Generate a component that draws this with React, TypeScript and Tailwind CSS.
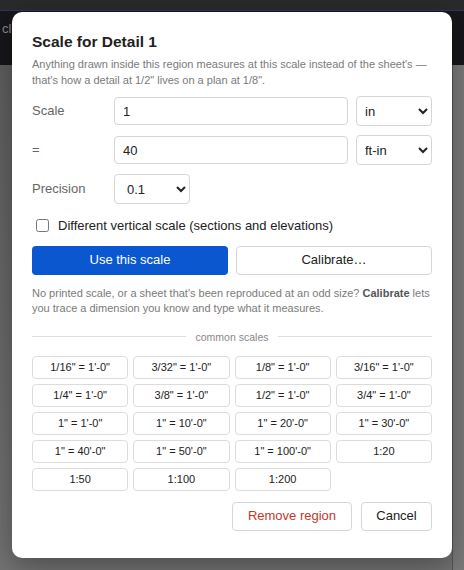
import React from "react";

const scales = [
  "1/16\" = 1'-0\"",
  "3/32\" = 1'-0\"",
  "1/8\" = 1'-0\"",
  "3/16\" = 1'-0\"",
  "1/4\" = 1'-0\"",
  "3/8\" = 1'-0\"",
  "1/2\" = 1'-0\"",
  "3/4\" = 1'-0\"",
  "1\" = 1'-0\"",
  "1\" = 10'-0\"",
  "1\" = 20'-0\"",
  "1\" = 30'-0\"",
  "1\" = 40'-0\"",
  "1\" = 50'-0\"",
  "1\" = 100'-0\"",
  "1:20",
  "1:50",
  "1:100",
  "1:200",
];

export default function App() {
  return (
    <div
      className="relative w-[464px] h-[570px] overflow-hidden bg-[#6b6b6b]"
      style={{ fontFamily: '"Liberation Sans", Arial, sans-serif' }}
    >
      {/* dimmed app behind */}
      <div className="flex flex-col h-full">
        <div className="h-[10px] bg-[#2a2a2c]" />
        <div className="h-[55px] bg-[#17171b] border-t border-[#2c3a5a] flex items-center pl-[2px]">
          <span className="text-[13px] text-[#8a8a90] -mt-[18px]">cli</span>
        </div>
        <div className="flex-1 flex bg-gradient-to-b from-[#5f5f5f] to-[#737373]">
          <div className="flex-1" />
          <div className="w-[12px] bg-[#7b7b7b] border-l border-[#555]" />
        </div>
      </div>

      {/* modal */}
      <div className="absolute left-[12px] top-[12px] w-[440px] h-[546px] bg-white rounded-[10px] shadow-[0_8px_30px_rgba(0,0,0,0.35)] px-[20px] pt-[20px]">
        <h2 className="text-[15.5px] font-bold text-[#222] leading-[20px]">Scale for Detail 1</h2>
        <p className="mt-[4px] text-[11px] leading-[16px] text-[#7a7a7a]">
          Anything drawn inside this region measures at this scale instead of the sheet's —
          that's how a detail at 1/2" lives on a plan at 1/8".
        </p>

        <div className="mt-[8px] flex flex-col gap-[9px]">
          <div className="flex items-center h-[30px]">
            <label className="w-[82px] text-[13px] text-[#666]">Scale</label>
            <input
              defaultValue="1"
              className="w-[234px] h-[28px] border border-[#d6d6d6] rounded-[4px] px-[8px] text-[13px] text-[#222] outline-none"
            />
            <select
              defaultValue="in"
              className="ml-[8px] w-[76px] h-[30px] border border-[#d6d6d6] rounded-[4px] pl-[4px] pr-[2px] text-[13px] text-[#222] bg-white"
            >
              <option value="in">in</option>
            </select>
          </div>
          <div className="flex items-center h-[30px]">
            <label className="w-[82px] text-[13px] text-[#666]">=</label>
            <input
              defaultValue="40"
              className="w-[234px] h-[28px] border border-[#d6d6d6] rounded-[4px] px-[8px] text-[13px] text-[#222] outline-none"
            />
            <select
              defaultValue="ft-in"
              className="ml-[8px] w-[76px] h-[30px] border border-[#d6d6d6] rounded-[4px] pl-[4px] pr-[2px] text-[13px] text-[#222] bg-white"
            >
              <option value="ft-in">ft-in</option>
            </select>
          </div>
          <div className="flex items-center h-[30px]">
            <label className="w-[82px] text-[13px] text-[#666]">Precision</label>
            <select
              defaultValue="0.1"
              className="w-[76px] h-[30px] border border-[#d6d6d6] rounded-[4px] pl-[8px] pr-[2px] text-[13px] text-[#222] bg-white"
            >
              <option value="0.1">0.1</option>
            </select>
          </div>
        </div>

        <label className="mt-[12px] flex items-center gap-[9px] pl-[4px]">
          <input type="checkbox" className="w-[13px] h-[13px] m-0" />
          <span className="text-[13px] text-[#222]">Different vertical scale (sections and elevations)</span>
        </label>

        <div className="mt-[10px] grid grid-cols-2 gap-[8px]">
          <button className="h-[29px] rounded-[4px] bg-[#0b57d0] text-white text-[13px]">Use this scale</button>
          <button className="h-[29px] rounded-[4px] border border-[#d6d6d6] bg-white text-[#222] text-[13px]">
            Calibrate…
          </button>
        </div>

        <p className="mt-[11px] text-[11px] leading-[15px] text-[#7a7a7a]">
          No printed scale, or a sheet that's been reproduced at an odd size?{" "}
          <b className="font-bold text-[#555]">Calibrate</b> lets you trace a dimension you know and type what it measures.
        </p>

        <div className="mt-[14px] flex items-center gap-[10px]">
          <div className="flex-1 h-px bg-[#dedede]" />
          <span className="text-[10.5px] text-[#888] leading-[14px]">common scales</span>
          <div className="flex-1 h-px bg-[#dedede]" />
        </div>

        <div className="mt-[12px] grid grid-cols-4 gap-[5px]">
          {scales.map((s) => (
            <button
              key={s}
              className="h-[23px] rounded-[4px] border border-[#dcdcdc] bg-white text-[11px] text-[#222]"
            >
              {s}
            </button>
          ))}
        </div>

        <div className="mt-[11px] flex justify-end gap-[9px]">
          <button className="h-[29px] w-[120px] rounded-[4px] border border-[#d6d6d6] bg-white text-[13px] text-[#c0392b]">
            Remove region
          </button>
          <button className="h-[29px] w-[71px] rounded-[4px] border border-[#d6d6d6] bg-white text-[13px] text-[#222]">
            Cancel
          </button>
        </div>
      </div>
    </div>
  );
}
